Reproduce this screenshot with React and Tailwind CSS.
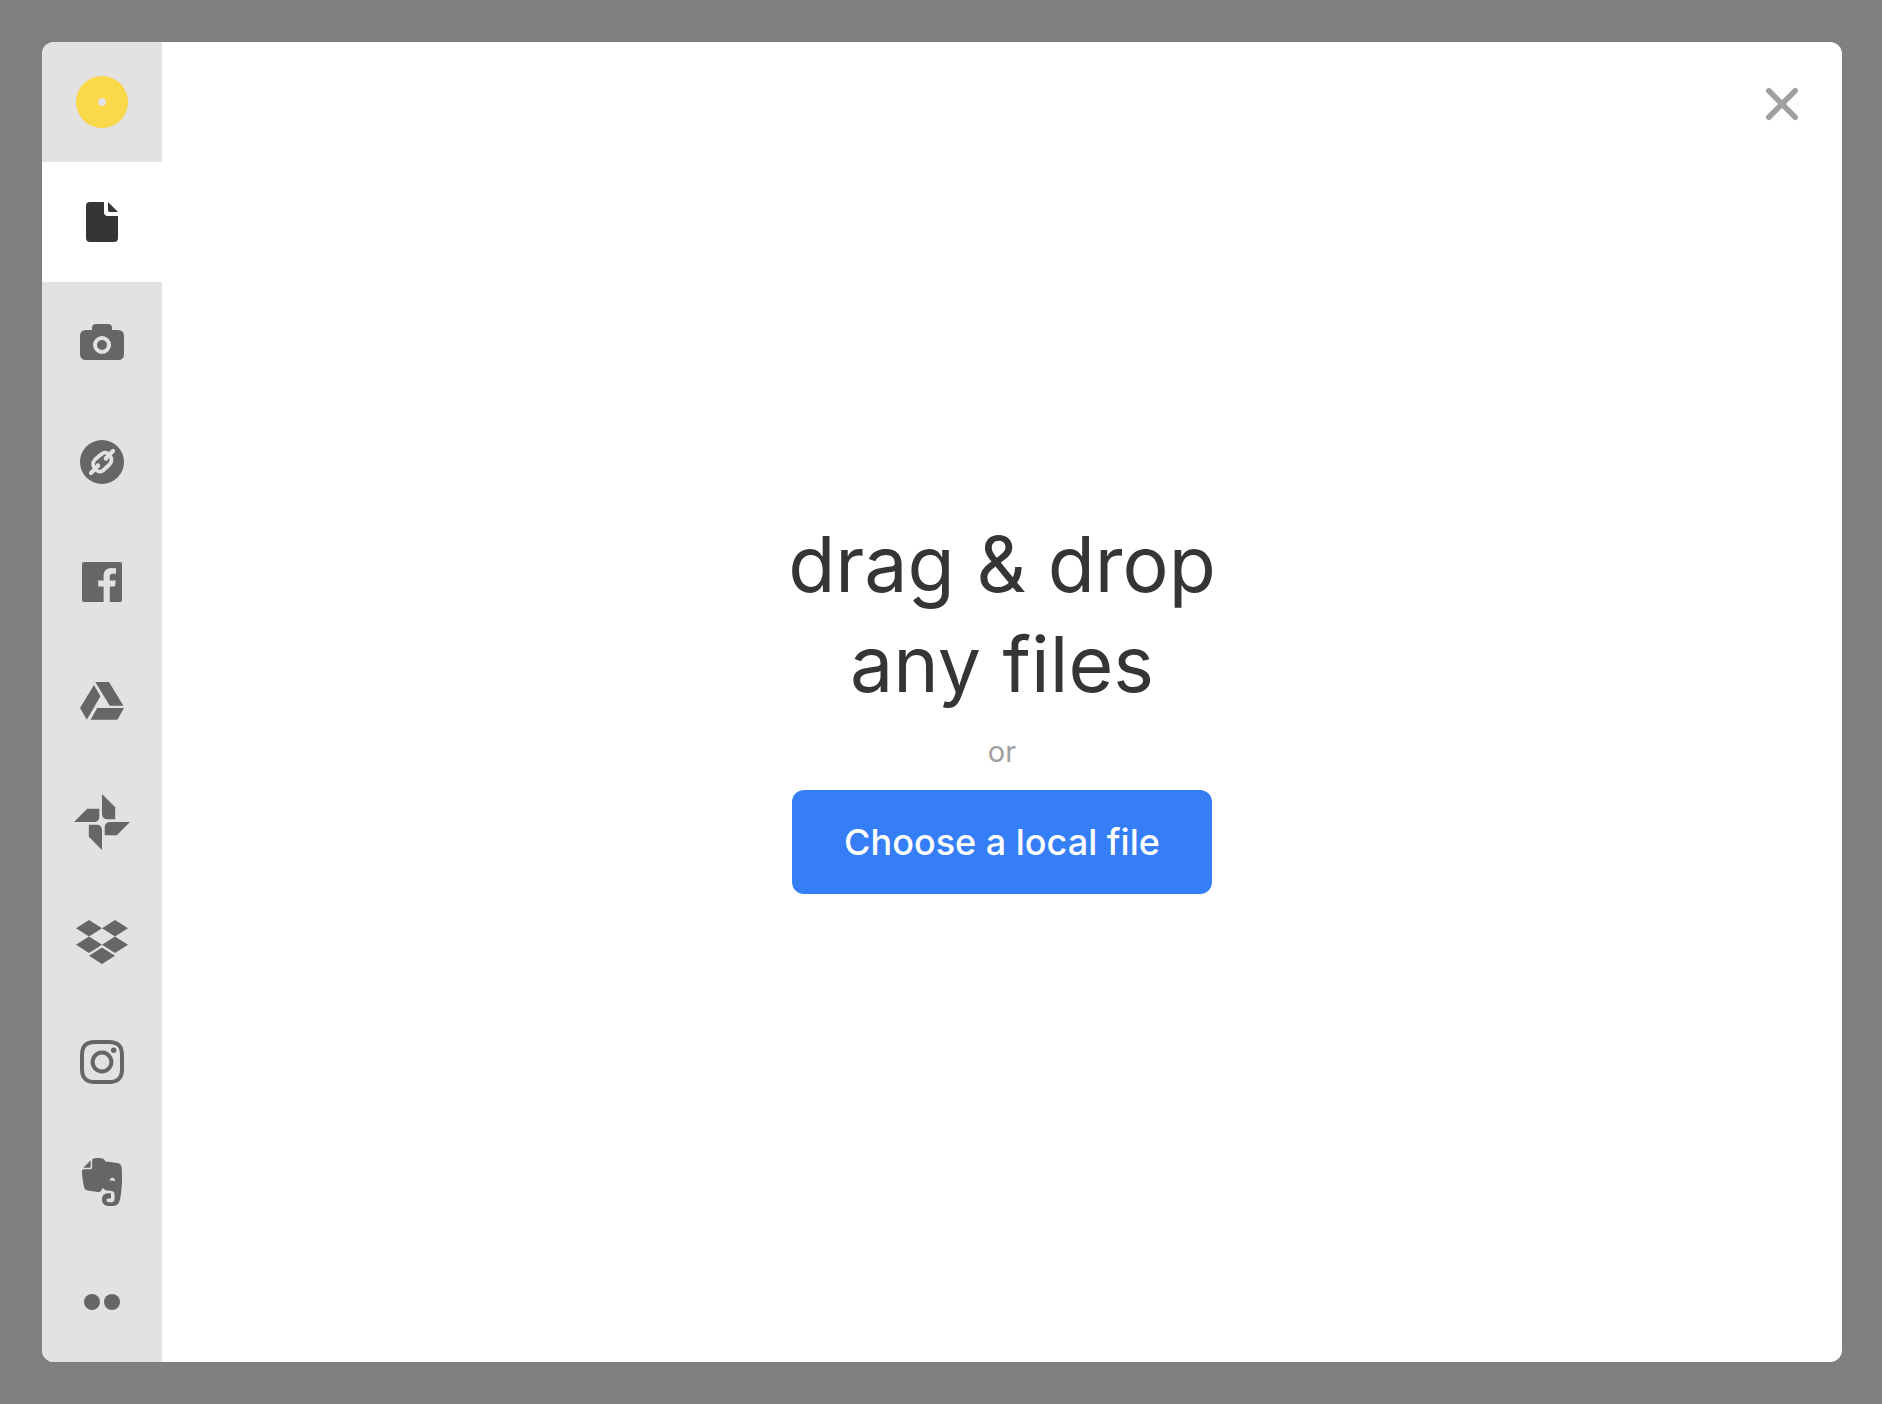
import React, { useRef, useState } from "react";

function Svg({ children }) {
  return (
    <svg viewBox="0 0 64 64" className="size-16 fill-current" aria-hidden="true">
      {children}
    </svg>
  );
}

const sources = [
  {
    id: "file",
    label: "Local files",
    icon: (
      <>
        <path d="M20 12H34V22Q34 26 38 26H48V48Q48 52 44 52H20Q16 52 16 48V16Q16 12 20 12Z" />
        <path d="M38 12L48 22H40Q38 22 38 20Z" />
      </>
    ),
  },
  {
    id: "camera",
    label: "Camera",
    icon: (
      <path
        fillRule="evenodd"
        d="M26 14H38Q42 14 42 18V20H48Q54 20 54 26V44Q54 50 48 50H16Q10 50 10 44V26Q10 20 16 20H22V18Q22 14 26 14ZM32 26a9 9 0 1 0 0 18a9 9 0 1 0 0-18ZM32 30a5 5 0 1 1 0 10a5 5 0 1 1 0-10Z"
      />
    ),
  },
  {
    id: "url",
    label: "Direct link",
    icon: (
      <>
        <circle cx="32" cy="32" r="22" />
        <g
          className="fill-none stroke-[#e3e1e2]"
          strokeWidth="3.8"
          strokeLinecap="round"
          strokeLinejoin="round"
        >
          <path d="M21 43L25 39" strokeWidth="4.2" />
          <path d="M39 25L43 21" strokeWidth="4.2" />
          <path d="M28 36L25.5 38.5C22 36 22.5 32 25.5 29L31 24.5C34 22 37 22 39 25L41 27.5C42 30 41.5 32.5 39 35L33 40.5C30.5 42.5 27.5 42 25.5 39" />
          <path d="M36 28L39 25" />
        </g>
        <circle cx="36" cy="28.5" r="2.3" className="fill-[#e3e1e2]" />
        <circle cx="28" cy="35.5" r="2.3" className="fill-[#e3e1e2]" />
      </>
    ),
  },
  {
    id: "facebook",
    label: "Facebook",
    icon: (
      <path d="M14 12H50Q52 12 52 14V50Q52 52 50 52H39.8V36.6H45L45.8 30.4H39.8V26.6C39.8 24.8 40.6 23.8 42.8 23.8H46V18.3Q44 18 41.4 18C36.6 18 33.6 20.9 33.6 26V30.4H28.2V36.6H33.6V52H14Q12 52 12 50V14Q12 12 14 12Z" />
    ),
  },
  {
    id: "gdrive",
    label: "Google Drive",
    icon: (
      <path d="M25.3 12H39L53.4 35.8H39.8ZM24 15L30.4 26.2L16.8 49.8L10 38ZM27.2 38H54L47.4 49.8H20.6Z" />
    ),
  },
  {
    id: "gphotos",
    label: "Google Photos",
    icon: (
      <>
        <path d="M32 4L45.2 17.2V29.3H37.5Q32 29.3 32 23.5Z" />
        <path d="M32 4L45.2 17.2V29.3H37.5Q32 29.3 32 23.5Z" transform="rotate(90 32 32)" />
        <path d="M32 4L45.2 17.2V29.3H37.5Q32 29.3 32 23.5Z" transform="rotate(180 32 32)" />
        <path d="M32 4L45.2 17.2V29.3H37.5Q32 29.3 32 23.5Z" transform="rotate(270 32 32)" />
      </>
    ),
  },
  {
    id: "dropbox",
    label: "Dropbox",
    icon: (
      <path d="M19 10L32 18.3L19 26.5L6 18.3ZM45 10L58 18.3L45 26.5L32 18.3ZM19 26.5L32 34.7L19 43L6 34.7ZM45 26.5L58 34.7L45 43L32 34.7ZM32 37.6L45 45.8L32 54L19 45.8Z" />
    ),
  },
  {
    id: "instagram",
    label: "Instagram",
    icon: (
      <>
        <path
          d="M32 12H39C48 12 52 16 52 25V39C52 48 48 52 39 52H25C16 52 12 48 12 39V25C12 16 16 12 25 12Z"
          className="fill-none stroke-current"
          strokeWidth="4"
        />
        <circle cx="32" cy="32" r="9.4" className="fill-none stroke-current" strokeWidth="4" />
        <circle cx="43.7" cy="20.2" r="2.7" />
      </>
    ),
  },
  {
    id: "evernote",
    label: "Evernote",
    icon: (
      <>
        <path d="M13.3 17.7L20.7 10.2V16.2Q20.7 17.7 19.2 17.7Z" />
        <path
          fillRule="evenodd"
          d="M22.2 9.5C23.5 8 26 7.8 29 8C32.5 8.2 34.5 8.8 35.3 11.5C38.5 11.9 42.5 12.2 46 12.8C49.5 13.3 51.2 14.2 51.6 17.5C52.3 25 52.3 36 50.8 45C49.8 52 48.5 56 43 56H39C34.5 56 32 53.5 32 49.5C32 45.5 34.5 43.3 38 43.3H41V48.6H38.6C37.2 48.6 36.6 49.3 36.6 50.3C36.6 51.5 37.5 52.2 39 52.2H41.5C43.6 52.2 44.6 50.8 44.6 48.3V45C44.6 41.8 43 41 39.5 40.8C36 40.6 33.8 39.8 32.8 37.5C32 40.5 30.5 42.6 27.5 42C24 41.6 20 41 17 40.3C14.6 39.7 14.2 38 13.7 35.5C12.8 31 12 25.5 12 21.5C12 20 12.6 19.3 14 19.3H19.5C21.5 19.3 22.2 18.5 22.2 16.7ZM39.7 30.8C41.2 30.2 43.5 30.3 45.2 31.2C45 29 44 27.7 42.5 27.7C40.9 27.7 39.9 29 39.7 30.8Z"
        />
      </>
    ),
  },
  {
    id: "flickr",
    label: "Flickr",
    icon: (
      <>
        <circle cx="22" cy="32" r="8" />
        <circle cx="42" cy="32" r="8" />
      </>
    ),
  },
];

export default function App() {
  const [active, setActive] = useState("file");
  const picker = useRef(null);

  return (
    <div className="flex min-h-screen bg-[#808080] py-[42px] pr-10 pl-[42px] font-[Inter,sans-serif]">
      <div
        role="dialog"
        aria-label="Upload files"
        className="relative flex grow overflow-hidden rounded-xl bg-white"
      >
        <nav className="flex w-[120px] shrink-0 flex-col bg-[#e3e1e2]" aria-label="Upload sources">
          <div className="flex h-[120px] items-center justify-center text-[#f9d94a]">
            <Svg>
              <path
                fillRule="evenodd"
                d="M32 6a26 26 0 1 0 0 52a26 26 0 1 0 0-52ZM32 28a4 4 0 1 1 0 8a4 4 0 1 1 0-8Z"
              />
            </Svg>
          </div>
          {sources.map((s) => (
            <button
              key={s.id}
              type="button"
              aria-label={s.label}
              aria-pressed={active === s.id}
              onClick={() => setActive(s.id)}
              className={
                active === s.id
                  ? "flex h-[120px] items-center justify-center bg-white text-[#353535]"
                  : "flex h-[120px] items-center justify-center text-[#666666]"
              }
            >
              <Svg>{s.icon}</Svg>
            </button>
          ))}
        </nav>

        <main className="flex grow flex-col items-center justify-center pt-1">
          <h1 className="text-center text-[77px] leading-[100px] text-[#353535]">
            drag &amp; drop
            <br />
            any files
          </h1>
          <p className="py-[18px] text-[29px] leading-10 text-[#a0a0a0]">or</p>
          <button
            type="button"
            onClick={() => picker.current.click()}
            className="h-[104px] rounded-xl bg-[#367ef5] px-[52px] text-4xl font-medium text-white"
          >
            Choose a local file
          </button>
          <input ref={picker} type="file" multiple hidden aria-label="Choose a local file" />
        </main>

        <button
          type="button"
          aria-label="Close"
          className="absolute top-[30px] right-7 text-[#a0a09f]"
        >
          <svg
            viewBox="0 0 64 64"
            className="size-16 fill-none stroke-current"
            strokeWidth="5.6"
            strokeLinecap="round"
            aria-hidden="true"
          >
            <path d="M18.8 18.8L45.2 45.2M45.2 18.8L18.8 45.2" />
          </svg>
        </button>
      </div>
    </div>
  );
}
